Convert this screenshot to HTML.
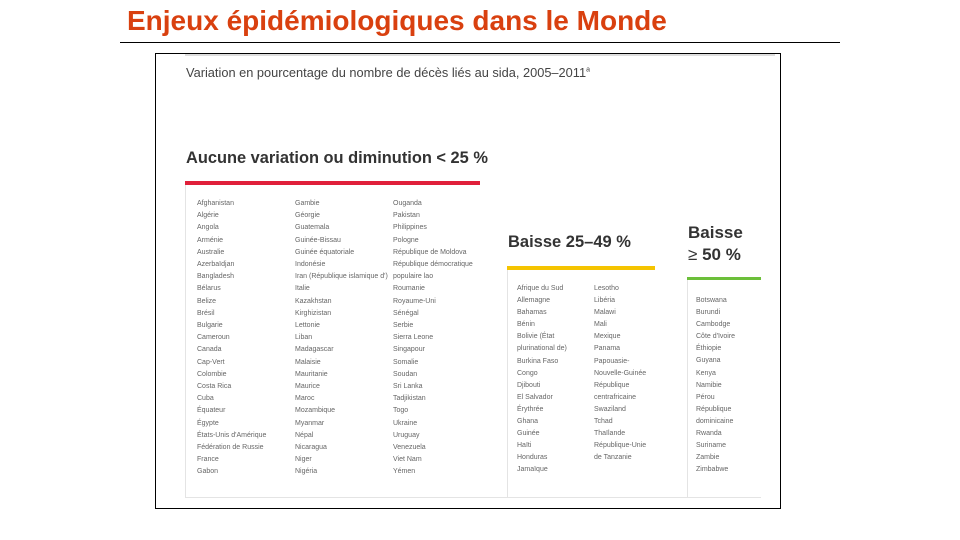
<!DOCTYPE html>
<html><head><meta charset="utf-8"><style>
body{margin:0;width:960px;height:540px;background:#fff;position:relative;overflow:hidden;font-family:"Liberation Sans",sans-serif}
.a{position:absolute}
.t{left:127px;top:5px;font-size:28px;font-weight:bold;color:#d9400f;white-space:nowrap}
.col{position:absolute;font-size:7px;line-height:12.2px;color:#666;white-space:nowrap}
h2{position:absolute;margin:0;font-weight:bold;color:#333;white-space:nowrap}
</style></head><body>
<div class="a t">Enjeux épidémiologiques dans le Monde</div>
<div class="a" style="left:120px;top:42px;width:720px;height:1px;background:#000"></div>
<div class="a" style="left:155px;top:53px;width:624px;height:454px;border:1px solid #000"></div>
<div class="a" style="left:185px;top:54px;width:590px;height:2px;background:#ddd"></div>
<div class="a" style="left:186px;top:65px;font-size:12.8px;color:#444;white-space:nowrap">Variation en pourcentage du nombre de décès liés au sida, 2005–2011<sup style="font-size:7px">a</sup></div>
<h2 style="left:186px;top:149px;font-size:16.4px">Aucune variation ou diminution &lt; 25 %</h2>
<div class="a" style="left:185px;top:181px;width:295px;height:4px;background:#e0203a"></div>
<div class="a" style="left:185px;top:185px;width:1px;height:312px;background:#e4e4e4"></div>
<div class="a" style="left:185px;top:497px;width:576px;height:1px;background:#e4e4e4"></div>
<div class="col" style="left:197px;top:198px">Afghanistan<br>Algérie<br>Angola<br>Arménie<br>Australie<br>Azerbaïdjan<br>Bangladesh<br>Bélarus<br>Belize<br>Brésil<br>Bulgarie<br>Cameroun<br>Canada<br>Cap-Vert<br>Colombie<br>Costa Rica<br>Cuba<br>Équateur<br>Égypte<br>États-Unis d'Amérique<br>Fédération de Russie<br>France<br>Gabon</div>
<div class="col" style="left:295px;top:198px">Gambie<br>Géorgie<br>Guatemala<br>Guinée-Bissau<br>Guinée équatoriale<br>Indonésie<br>Iran (République islamique d')<br>Italie<br>Kazakhstan<br>Kirghizistan<br>Lettonie<br>Liban<br>Madagascar<br>Malaisie<br>Mauritanie<br>Maurice<br>Maroc<br>Mozambique<br>Myanmar<br>Népal<br>Nicaragua<br>Niger<br>Nigéria</div>
<div class="col" style="left:393px;top:198px">Ouganda<br>Pakistan<br>Philippines<br>Pologne<br>République de Moldova<br>République démocratique<br>populaire lao<br>Roumanie<br>Royaume-Uni<br>Sénégal<br>Serbie<br>Sierra Leone<br>Singapour<br>Somalie<br>Soudan<br>Sri Lanka<br>Tadjikistan<br>Togo<br>Ukraine<br>Uruguay<br>Venezuela<br>Viet Nam<br>Yémen</div>
<h2 style="left:508px;top:233px;font-size:16.5px">Baisse 25–49 %</h2>
<div class="a" style="left:507px;top:266px;width:148px;height:4px;background:#f5c400"></div>
<div class="a" style="left:507px;top:270px;width:1px;height:227px;background:#e4e4e4"></div>
<div class="col" style="left:517px;top:283px;line-height:12.1px">Afrique du Sud<br>Allemagne<br>Bahamas<br>Bénin<br>Bolivie (État<br>plurinational de)<br>Burkina Faso<br>Congo<br>Djibouti<br>El Salvador<br>Érythrée<br>Ghana<br>Guinée<br>Haïti<br>Honduras<br>Jamaïque</div>
<div class="col" style="left:594px;top:283px;line-height:12.1px">Lesotho<br>Libéria<br>Malawi<br>Mali<br>Mexique<br>Panama<br>Papouasie-<br>Nouvelle-Guinée<br>République<br>centrafricaine<br>Swaziland<br>Tchad<br>Thaïlande<br>République-Unie<br>de Tanzanie</div>
<h2 style="left:688px;top:222px;font-size:17px;line-height:22px">Baisse<br><span style="font-weight:normal">≥</span> 50 %</h2>
<div class="a" style="left:687px;top:277px;width:74px;height:3px;background:#6cbf3a"></div>
<div class="a" style="left:687px;top:280px;width:1px;height:217px;background:#e4e4e4"></div>
<div class="col" style="left:696px;top:295px;line-height:12.1px">Botswana<br>Burundi<br>Cambodge<br>Côte d'Ivoire<br>Éthiopie<br>Guyana<br>Kenya<br>Namibie<br>Pérou<br>République<br>dominicaine<br>Rwanda<br>Suriname<br>Zambie<br>Zimbabwe</div>
</body></html>
